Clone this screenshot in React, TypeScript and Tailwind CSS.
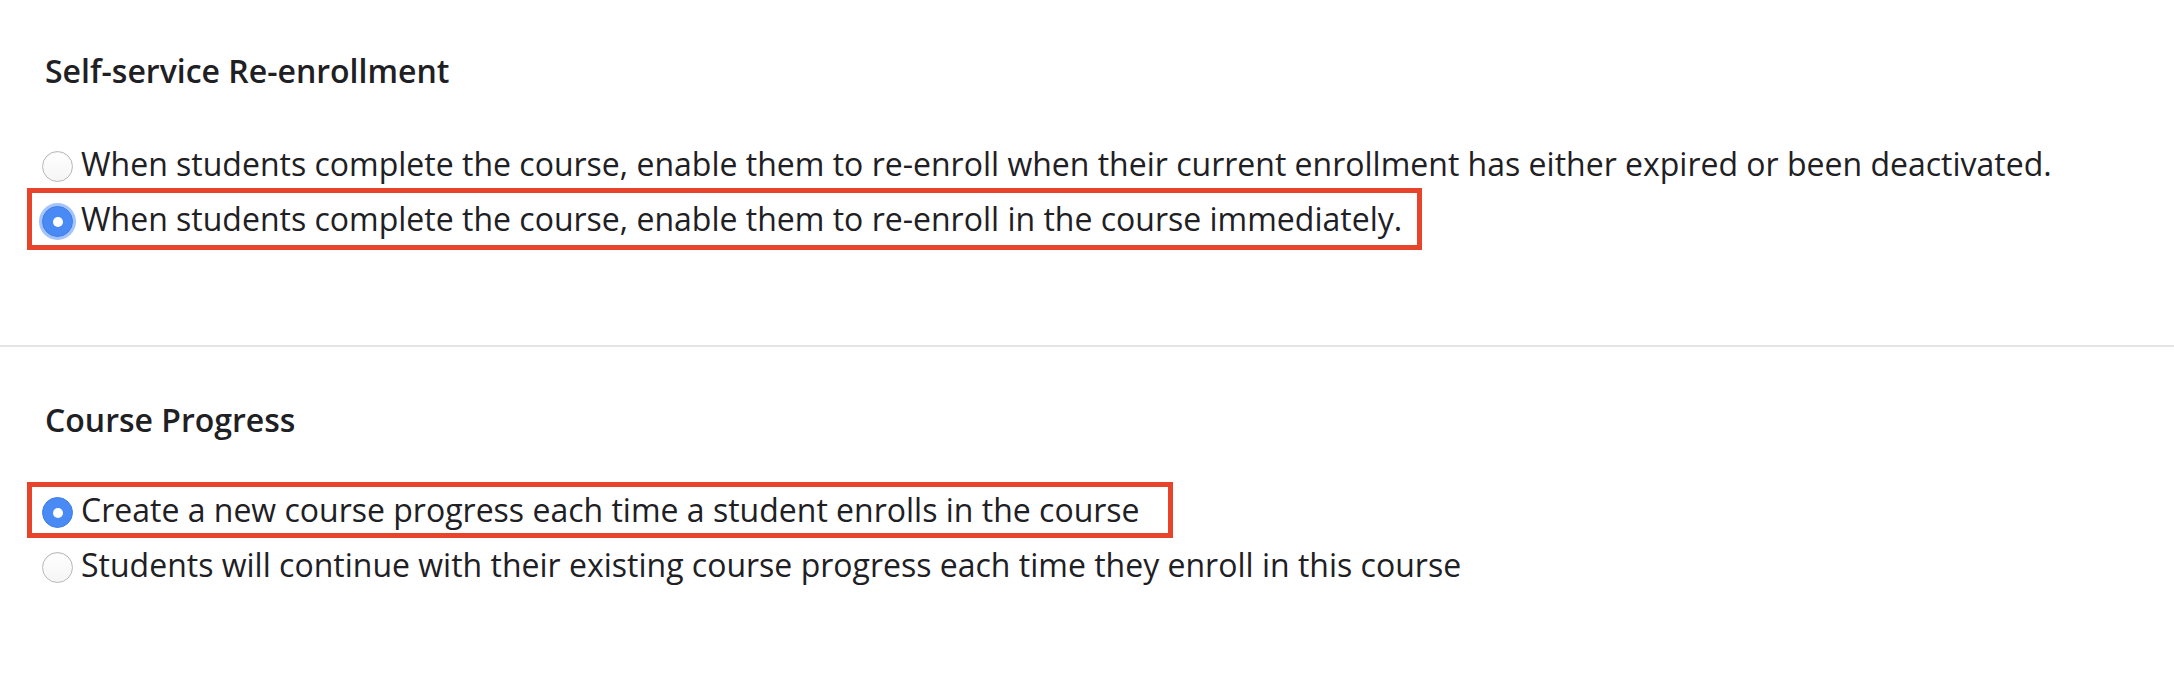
import { FC } from "react";

interface RadioProps {
  checked?: boolean;
  focused?: boolean;
}

const Radio: FC<RadioProps> = ({ checked, focused }) => {
  if (checked) {
    return (
      <span
        className={`mt-[17px] flex h-[31px] w-[31px] shrink-0 items-center justify-center rounded-full border border-[#3f7ee8] bg-[#4a8af4] ${
          focused ? "shadow-[0_0_0_3px_rgba(88,146,245,0.55)]" : ""
        }`}
      >
        <span className="h-[10px] w-[10px] rounded-full bg-white" />
      </span>
    );
  }
  return (
    <span className="mt-[17px] h-[31px] w-[31px] shrink-0 rounded-full border border-[#b8b8b8] bg-gradient-to-b from-white to-[#f5f5f5] shadow-[inset_0_1px_1px_rgba(0,0,0,0.05)]" />
  );
};

interface OptionProps {
  label: string;
  checked?: boolean;
  focused?: boolean;
  highlight?: { top: number; width: number; height: number };
}

const Option: FC<OptionProps> = ({ label, checked, focused, highlight }) => (
  <div className="relative flex h-[55px] items-start gap-[8px]">
    <Radio checked={checked} focused={focused} />
    <span className="mt-[4px] text-[32px] leading-[52px] text-[#1e2024] whitespace-nowrap">
      {label}
    </span>
    {highlight && (
      <div
        className="pointer-events-none absolute left-[-15px] border-[5px] border-[#e8442b]"
        style={{
          top: highlight.top,
          width: highlight.width,
          height: highlight.height,
        }}
      />
    )}
  </div>
);

export default function App() {
  return (
    <div
      className="h-[692px] w-[2174px] bg-white"
      style={{ fontFamily: '"Open Sans", "Noto Sans", sans-serif' }}
    >
      <section className="pl-[42px] pt-[51px] pb-[101px]">
        <h2 className="pl-[3px] text-[32px] font-semibold leading-[40px] text-[#1e2024]">
          Self-service Re-enrollment
        </h2>
        <div className="mt-[43px] flex flex-col">
          <Option label="When students complete the course, enable them to re-enroll when their current enrollment has either expired or been deactivated." />
          <Option
            label="When students complete the course, enable them to re-enroll in the course immediately."
            checked
            focused
            highlight={{ top: -1, width: 1395, height: 62 }}
          />
        </div>
      </section>
      <div className="h-[2px] w-full bg-[#e4e4e4]" />
      <section className="pl-[42px] pt-[53px]">
        <h2 className="pl-[3px] text-[32px] font-semibold leading-[40px] text-[#1e2024]">
          Course Progress
        </h2>
        <div className="mt-[40px] flex flex-col">
          <Option
            label="Create a new course progress each time a student enrolls in the course"
            checked
            highlight={{ top: 2, width: 1146, height: 56 }}
          />
          <Option label="Students will continue with their existing course progress each time they enroll in this course" />
        </div>
      </section>
    </div>
  );
}
